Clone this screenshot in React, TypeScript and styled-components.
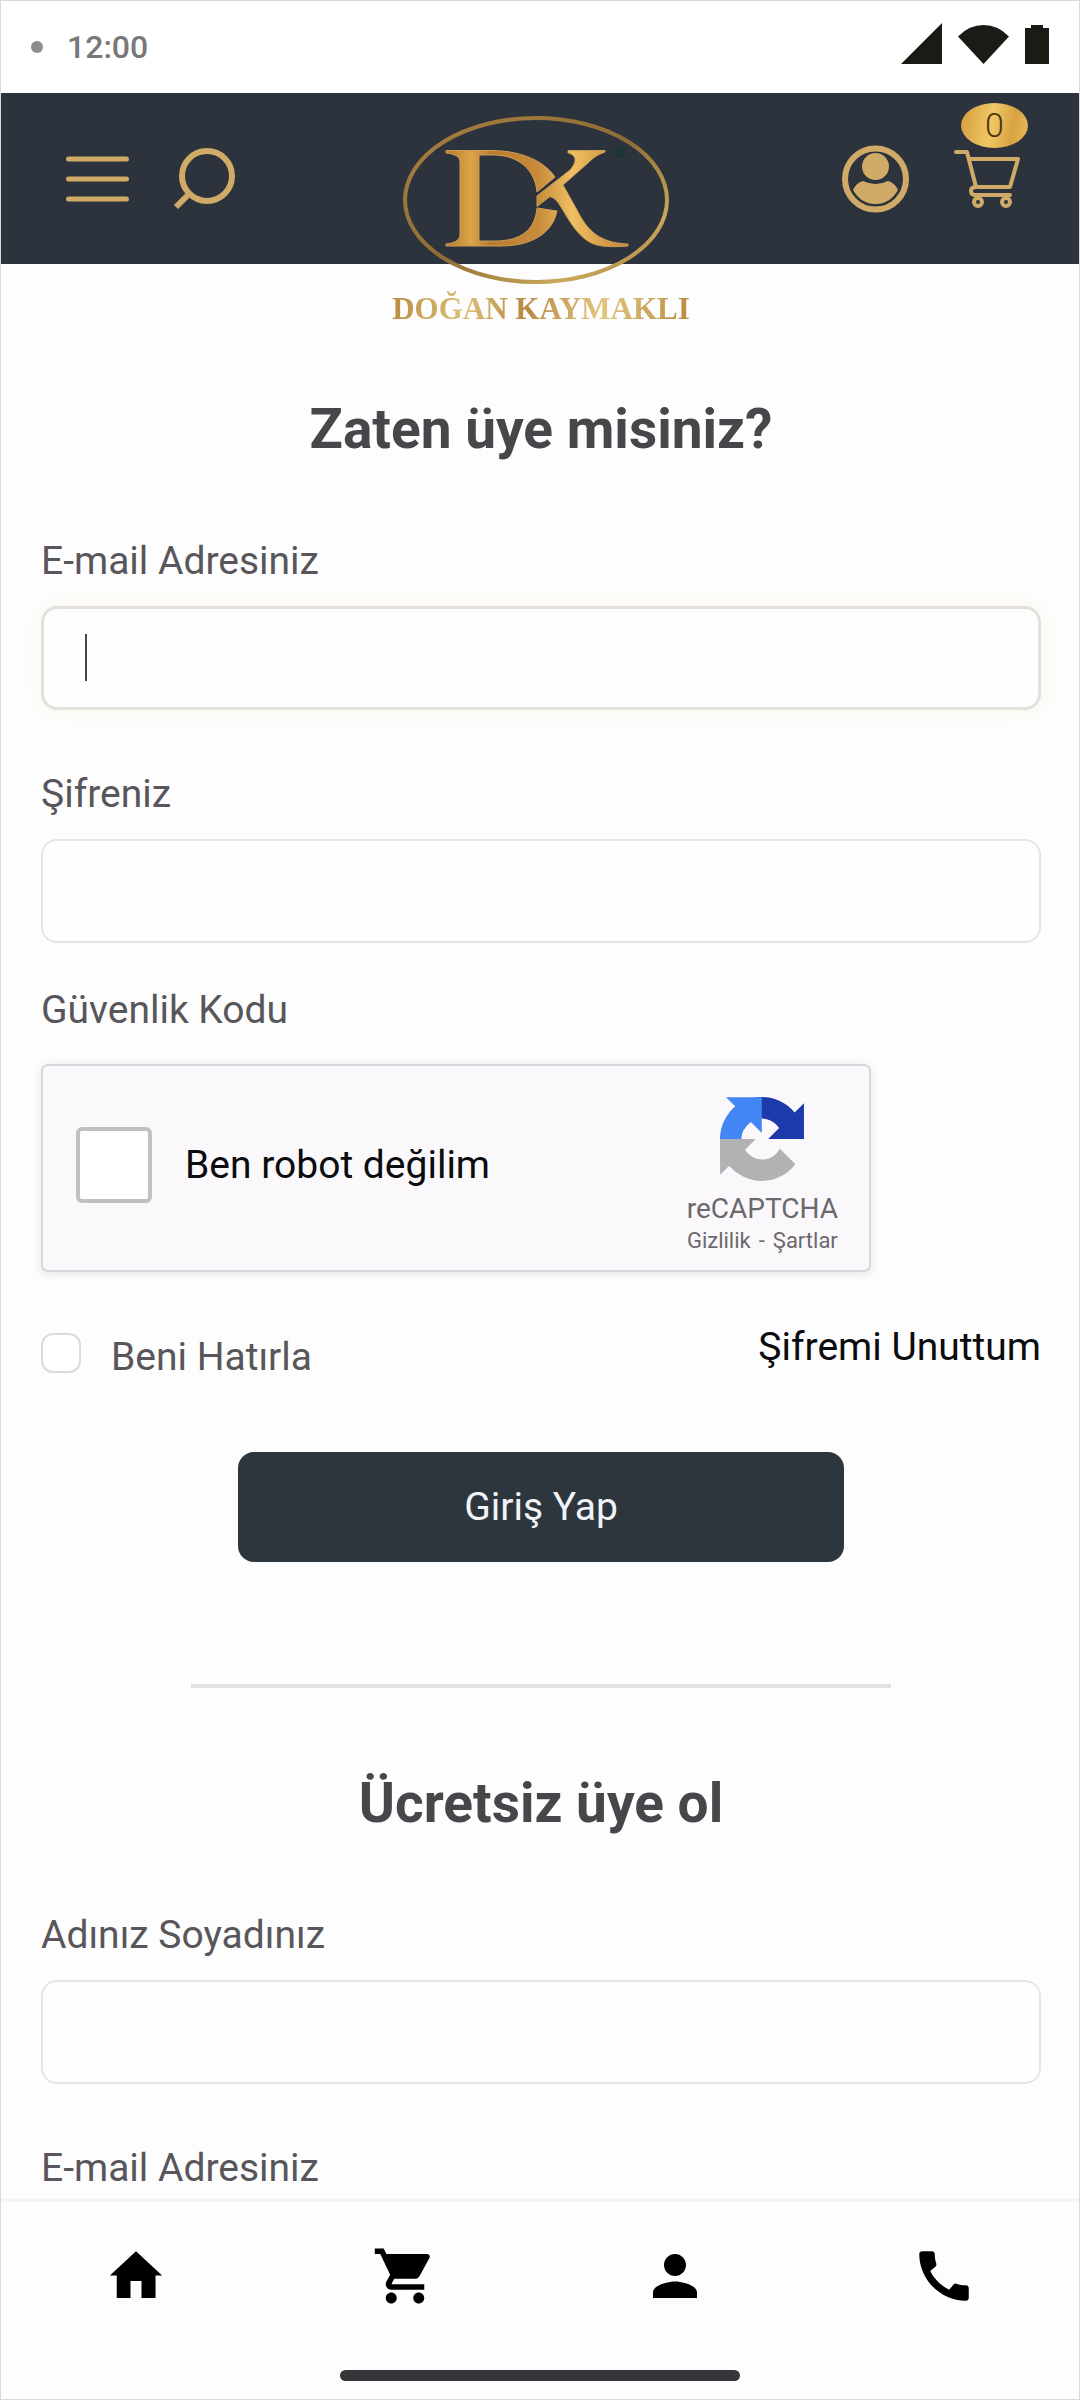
import styled, { createGlobalStyle, css } from 'styled-components';
import { MdCall, MdPerson, MdShoppingCart } from 'react-icons/md';

const GlobalStyle = createGlobalStyle`
  *, *::before, *::after {
    box-sizing: border-box;
  }
  body {
    margin: 0;
    background: #fdfdfd;
    color: #58565a;
    font-family: Roboto, 'Liberation Sans', sans-serif;
    font-size: 39px;
    line-height: 48px;
  }
  button, input {
    font: inherit;
  }
  a {
    color: inherit;
    text-decoration: none;
  }
  svg {
    display: block;
    flex-shrink: 0;
  }
`;

const Screen = styled.div`
  display: flex;
  flex-direction: column;
  height: 100vh;
  border: 1px solid #dad9dc;
`;

const StatusBar = styled.div`
  display: flex;
  align-items: center;
  flex-shrink: 0;
  height: 92px;
  padding: 0 30px;
  background: #fff;
`;
const Dot = styled.span`
  width: 12px;
  height: 12px;
  margin-right: 24px;
  border-radius: 50%;
  background: #8d8b8c;
`;
const Time = styled.span`
  flex: 1;
  font-size: 32px;
  font-weight: 500;
  color: #797778;
`;
const StatusIcons = styled.div`
  display: flex;
  align-items: flex-end;
  gap: 16px;
  padding-bottom: 8px;
  color: #1b1a15;
`;

const Header = styled.header`
  position: relative;
  z-index: 1;
  display: grid;
  grid-template: 171px / 1fr auto 1fr;
  flex-shrink: 0;
  height: 171px;
  padding: 0 58px 0 60px;
  background: #2d333c;
`;
const HeaderGroup = styled.div<{ $end?: boolean }>`
  display: flex;
  align-items: center;
  justify-content: ${({ $end }) => ($end ? 'flex-end' : 'flex-start')};
  gap: 44px;
`;
const IconButton = styled.button`
  position: relative;
  padding: 0;
  border: 0;
  background: none;
  color: #d0ab68;
`;
const Badge = styled.span`
  position: absolute;
  top: -46px;
  left: 8px;
  width: 67px;
  height: 45px;
  border-radius: 50%;
  background: linear-gradient(100deg, #d69a3c, #efc866 45%, #d9a243 75%, #e9bd5c);
  color: #4d3510;
  font-size: 34px;
  font-weight: 300;
  line-height: 45px;
  text-align: center;
`;
const Brand = styled.a`
  display: flex;
  flex-direction: column;
  align-items: center;
  padding-top: 19px;
`;
const BrandName = styled.span`
  background: linear-gradient(100deg, #b98a3e, #dcc078 25%, #b8893f 45%, #e0c67e 70%, #b98a3e);
  background-clip: text;
  -webkit-background-clip: text;
  color: transparent;
  font-family: 'Liberation Serif', serif;
  font-size: 31px;
  font-weight: 700;
  line-height: 42px;
  white-space: nowrap;
`;

const Main = styled.main`
  flex: 1;
  min-height: 0;
  overflow-y: auto;
  scrollbar-width: none;
  padding: 133px 38px 60px 40px;
`;
const Title = styled.h2`
  margin: 0 0 76px;
  color: #49464b;
  font-size: 55px;
  font-weight: 700;
  line-height: 64px;
  text-align: center;
`;
const Fields = styled.div`
  display: flex;
  flex-direction: column;
  gap: 60px;
`;
const Field = styled.div`
  position: relative;
  display: flex;
  flex-direction: column;
  gap: 21px;
`;
const TextInput = styled.input<{ $active?: boolean }>`
  width: 100%;
  height: 104px;
  padding: 0 44px;
  border: 2px solid #e6e4e7;
  border-radius: 16px;
  background: #fefefe;
  color: #49464b;
  outline: none;
  ${({ $active }) =>
    $active &&
    css`
      border: 3px solid #e3e0da;
      box-shadow: 0 0 20px #faf6ea;
    `}
`;
const Caret = styled.span`
  position: absolute;
  bottom: 29px;
  left: 44px;
  width: 2px;
  height: 47px;
  background: #49464b;
`;

const CaptchaTitle = styled.div`
  margin: 43px 0 30px;
`;
const Captcha = styled.div`
  display: flex;
  align-items: center;
  justify-content: space-between;
  max-width: 830px;
  height: 208px;
  padding: 0 31px 0 33px;
  border: 2px solid #d8d6da;
  border-radius: 7px;
  background: #faf8fb;
  box-shadow: 0 2px 8px #e4e2e6;
`;
const CaptchaLabel = styled.label`
  display: flex;
  align-items: center;
  gap: 33px;
  padding-bottom: 6px;
  color: #0c0b0d;
`;
const Checkbox = styled.input<{ $large?: boolean }>`
  appearance: none;
  flex-shrink: 0;
  width: ${({ $large }) => ($large ? 76 : 40)}px;
  height: ${({ $large }) => ($large ? 76 : 40)}px;
  margin: 0;
  border: ${({ $large }) => ($large ? '4px solid #c1bfc1' : '2px solid #dcdadd')};
  border-radius: ${({ $large }) => ($large ? 6 : 12)}px;
  background: #fff;
`;
const CaptchaBrand = styled.div`
  display: flex;
  flex-direction: column;
  align-items: center;
  padding-top: 17px;
  color: #6b696c;
  font-size: 28px;
  line-height: 32px;

  svg {
    margin-bottom: 12px;
  }
`;
const CaptchaLinks = styled.div`
  display: flex;
  gap: 8px;
  font-size: 22px;
`;

const Options = styled.div`
  display: flex;
  align-items: flex-start;
  justify-content: space-between;
  margin: 51px 0 71px;
`;
const Remember = styled.label`
  display: flex;
  gap: 30px;
  padding-top: 10px;
`;
const ForgotLink = styled.a`
  color: #0c0b0d;
`;
const SubmitButton = styled.button`
  display: block;
  width: 100%;
  max-width: 606px;
  height: 110px;
  margin: 0 auto;
  border: 0;
  border-radius: 16px;
  background: #2e363d;
  color: #f1f3f8;
`;
const Divider = styled.hr`
  width: 70%;
  height: 4px;
  margin: 122px auto 83px;
  border: 0;
  background: #e3e1e4;
`;

const TabBar = styled.nav`
  display: grid;
  grid-template-columns: repeat(4, 1fr);
  flex-shrink: 0;
  height: 151px;
  border-top: 3px solid #f4f3f6;
  background: #fdfdfd;
`;
const Tab = styled.a`
  display: flex;
  align-items: center;
  justify-content: center;
  color: #000;
`;
const HomeIndicator = styled.div`
  flex-shrink: 0;
  width: 400px;
  height: 11px;
  margin: 20px auto 18px;
  border-radius: 6px;
  background: #37353a;
`;

const Logo = () => (
  <svg width="300" height="176" viewBox="0 0 300 176" aria-hidden="true">
    <defs>
      <linearGradient id="ring" x1="0" y1="0" x2="1" y2="1">
        <stop offset="0" stopColor="#a98040" />
        <stop offset="0.5" stopColor="#8f6c35" />
        <stop offset="0.8" stopColor="#cda85c" />
        <stop offset="1" stopColor="#96703a" />
      </linearGradient>
      <linearGradient id="gold" gradientUnits="userSpaceOnUse" x1="56" y1="0" x2="240" y2="0">
        <stop offset="0" stopColor="#b57a2e" />
        <stop offset="0.13" stopColor="#dda548" />
        <stop offset="0.24" stopColor="#b97a30" />
        <stop offset="0.5" stopColor="#c88c3a" />
        <stop offset="0.68" stopColor="#f0c062" />
        <stop offset="1" stopColor="#bd8234" />
      </linearGradient>
    </defs>
    <ellipse cx="145" cy="88" rx="131" ry="82" fill="none" stroke="url(#ring)" strokeWidth="4" />
    <g fill="url(#gold)" stroke="#c99e58" strokeWidth="1">
      <path d="M55 38.5H102C132 39 154 50 164 65L146 80C144 58 128 43 102 43H88V129H104C130 129 144 118 146 96L166 99C162 120 142 134 110 134H55V132C63 131 69 129 69 122V50C69 44 63 42 55 41Z" />
      <path d="M177 38.5H214V40C206 43 202 46 197 51L172 73L186 98C196 118 208 131 237 132V134C226 135 214 135 206 133C190 129 180 112 170 95Q165 86 159 84.5L146 94.5V84L179 58C186 50 186 43 177 41Z" />
    </g>
    <circle cx="229" cy="40" r="6" fill="#1d3531" />
  </svg>
);

const MenuIcon = () => (
  <svg width="68" height="46" viewBox="0 0 68 46" stroke="currentColor" strokeWidth="5" strokeLinecap="round">
    <path d="M7.5 3H65.5M7.5 23H65.5M7.5 43H65.5" />
  </svg>
);

const SearchIcon = () => (
  <svg width="64" height="64" viewBox="0 0 64 64" fill="none" stroke="currentColor" strokeWidth="6">
    <circle cx="34" cy="29" r="25" />
    <path d="M17 46L3 60" />
  </svg>
);

const UserIcon = () => (
  <svg width="67" height="68" viewBox="0 0 67 68">
    <circle cx="33.5" cy="34" r="30.5" fill="none" stroke="currentColor" strokeWidth="6" />
    <circle cx="33.5" cy="21.5" r="13.5" fill="currentColor" />
    <path d="M21 36Q27 39 33.5 39T46 36Q53 38 56 45Q48 59 33.5 59T11 45Q14 38 21 36Z" fill="currentColor" />
  </svg>
);

const CartIcon = () => (
  <svg
    width="68"
    height="60"
    viewBox="0 0 68 60"
    fill="none"
    stroke="currentColor"
    strokeWidth="4"
    strokeLinecap="round"
    strokeLinejoin="round"
  >
    <path d="M3 3H14L23 38H57L65 10H16" />
    <path d="M23 38Q18 38 18 42T23 46H57" />
    <circle cx="25" cy="53" r="4" />
    <circle cx="53" cy="53" r="4" />
  </svg>
);

const RecaptchaIcon = () => (
  <svg width="84" height="84" viewBox="0 0 64 64">
    <path
      fill="#1c3aa9"
      d="M64 31.955l-.033-1.37V4.687l-7.16 7.16C50.948 4.674 42.033.093 32.05.093c-10.4 0-19.622 4.96-25.458 12.64l11.736 11.86a15.55 15.55 0 0 1 4.754-5.334c2.05-1.6 4.952-2.906 8.968-2.906.485 0 .86.057 1.135.163 4.976.393 9.288 3.14 11.828 7.124l-8.307 8.307L64 31.953"
    />
    <path
      fill="#4285f4"
      d="M31.862.094l-1.37.033H4.594l7.16 7.16C4.58 13.147 0 22.06 0 32.046c0 10.4 4.96 19.622 12.64 25.458L24.5 45.768a15.55 15.55 0 0 1-5.334-4.754c-1.6-2.05-2.906-4.952-2.906-8.968 0-.485.057-.86.163-1.135.393-4.976 3.14-9.288 7.124-11.828l8.307 8.307L31.86.095"
    />
    <path
      fill="#b3b2b3"
      d="M.001 32.045l.033 1.37v25.898l7.16-7.16c5.86 7.173 14.774 11.754 24.76 11.754 10.4 0 19.622-4.96 25.458-12.64l-11.736-11.86a15.55 15.55 0 0 1-4.754 5.334c-2.05 1.6-4.952 2.906-8.968 2.906-.485 0-.86-.057-1.135-.163-4.976-.393-9.288-3.14-11.828-7.124l8.307-8.307c-10.522.04-22.4.066-27.295-.005"
    />
  </svg>
);

const HomeIcon = () => (
  <svg width="66" height="66" viewBox="0 0 24 24" fill="currentColor">
    <path d="M12 3L2.5 11.8H5V20h5v-6.2h4V20h5.1v-8.2h2.4z" />
  </svg>
);

interface FormFieldProps {
  id: string;
  label: string;
  type?: string;
  active?: boolean;
}

const FormField = ({ id, label, type = 'text', active }: FormFieldProps) => (
  <Field>
    <label htmlFor={id}>{label}</label>
    <TextInput id={id} type={type} $active={active} />
    {active && <Caret />}
  </Field>
);

const App = () => {
  return (
    <>
      <GlobalStyle />
      <Screen>
        <StatusBar>
          <Dot />
          <Time>12:00</Time>
          <StatusIcons>
            <svg width="41" height="41" viewBox="0 0 41 41" fill="currentColor">
              <path d="M0 41L41 0V41Z" />
            </svg>
            <svg width="51" height="39" viewBox="0 0 51 39" fill="currentColor">
              <path d="M0 11.5Q11 0 25.5 0T51 11.5L25.5 39Z" />
            </svg>
            <svg width="24" height="39" viewBox="0 0 24 39" fill="currentColor">
              <path d="M0 3H6V0H18V3H24V39H0Z" />
            </svg>
          </StatusIcons>
        </StatusBar>
        <Header>
          <HeaderGroup>
            <IconButton aria-label="Menü">
              <MenuIcon />
            </IconButton>
            <IconButton aria-label="Ara">
              <SearchIcon />
            </IconButton>
          </HeaderGroup>
          <Brand href="#">
            <Logo />
            <BrandName>DOĞAN KAYMAKLI</BrandName>
          </Brand>
          <HeaderGroup $end>
            <IconButton aria-label="Hesabım">
              <UserIcon />
            </IconButton>
            <IconButton aria-label="Sepetim">
              <CartIcon />
              <Badge>0</Badge>
            </IconButton>
          </HeaderGroup>
        </Header>
        <Main>
          <Title>Zaten üye misiniz?</Title>
          <Fields>
            <FormField id="login-email" label="E-mail Adresiniz" type="email" active />
            <FormField id="login-password" label="Şifreniz" type="password" />
          </Fields>
          <CaptchaTitle>Güvenlik Kodu</CaptchaTitle>
          <Captcha>
            <CaptchaLabel>
              <Checkbox type="checkbox" $large />
              Ben robot değilim
            </CaptchaLabel>
            <CaptchaBrand>
              <RecaptchaIcon />
              <span>reCAPTCHA</span>
              <CaptchaLinks>
                <a href="#">Gizlilik</a>
                <span>-</span>
                <a href="#">Şartlar</a>
              </CaptchaLinks>
            </CaptchaBrand>
          </Captcha>
          <Options>
            <Remember>
              <Checkbox type="checkbox" />
              Beni Hatırla
            </Remember>
            <ForgotLink href="#">Şifremi Unuttum</ForgotLink>
          </Options>
          <SubmitButton type="submit">Giriş Yap</SubmitButton>
          <Divider />
          <Title>Ücretsiz üye ol</Title>
          <Fields>
            <FormField id="register-name" label="Adınız Soyadınız" />
            <FormField id="register-email" label="E-mail Adresiniz" type="email" />
          </Fields>
        </Main>
        <TabBar>
          <Tab href="#" aria-label="Ana Sayfa">
            <HomeIcon />
          </Tab>
          <Tab href="#" aria-label="Sepet">
            <MdShoppingCart size={66} />
          </Tab>
          <Tab href="#" aria-label="Üyelik">
            <MdPerson size={66} />
          </Tab>
          <Tab href="#" aria-label="Telefon">
            <MdCall size={66} />
          </Tab>
        </TabBar>
        <HomeIndicator />
      </Screen>
    </>
  );
};

export default App;
